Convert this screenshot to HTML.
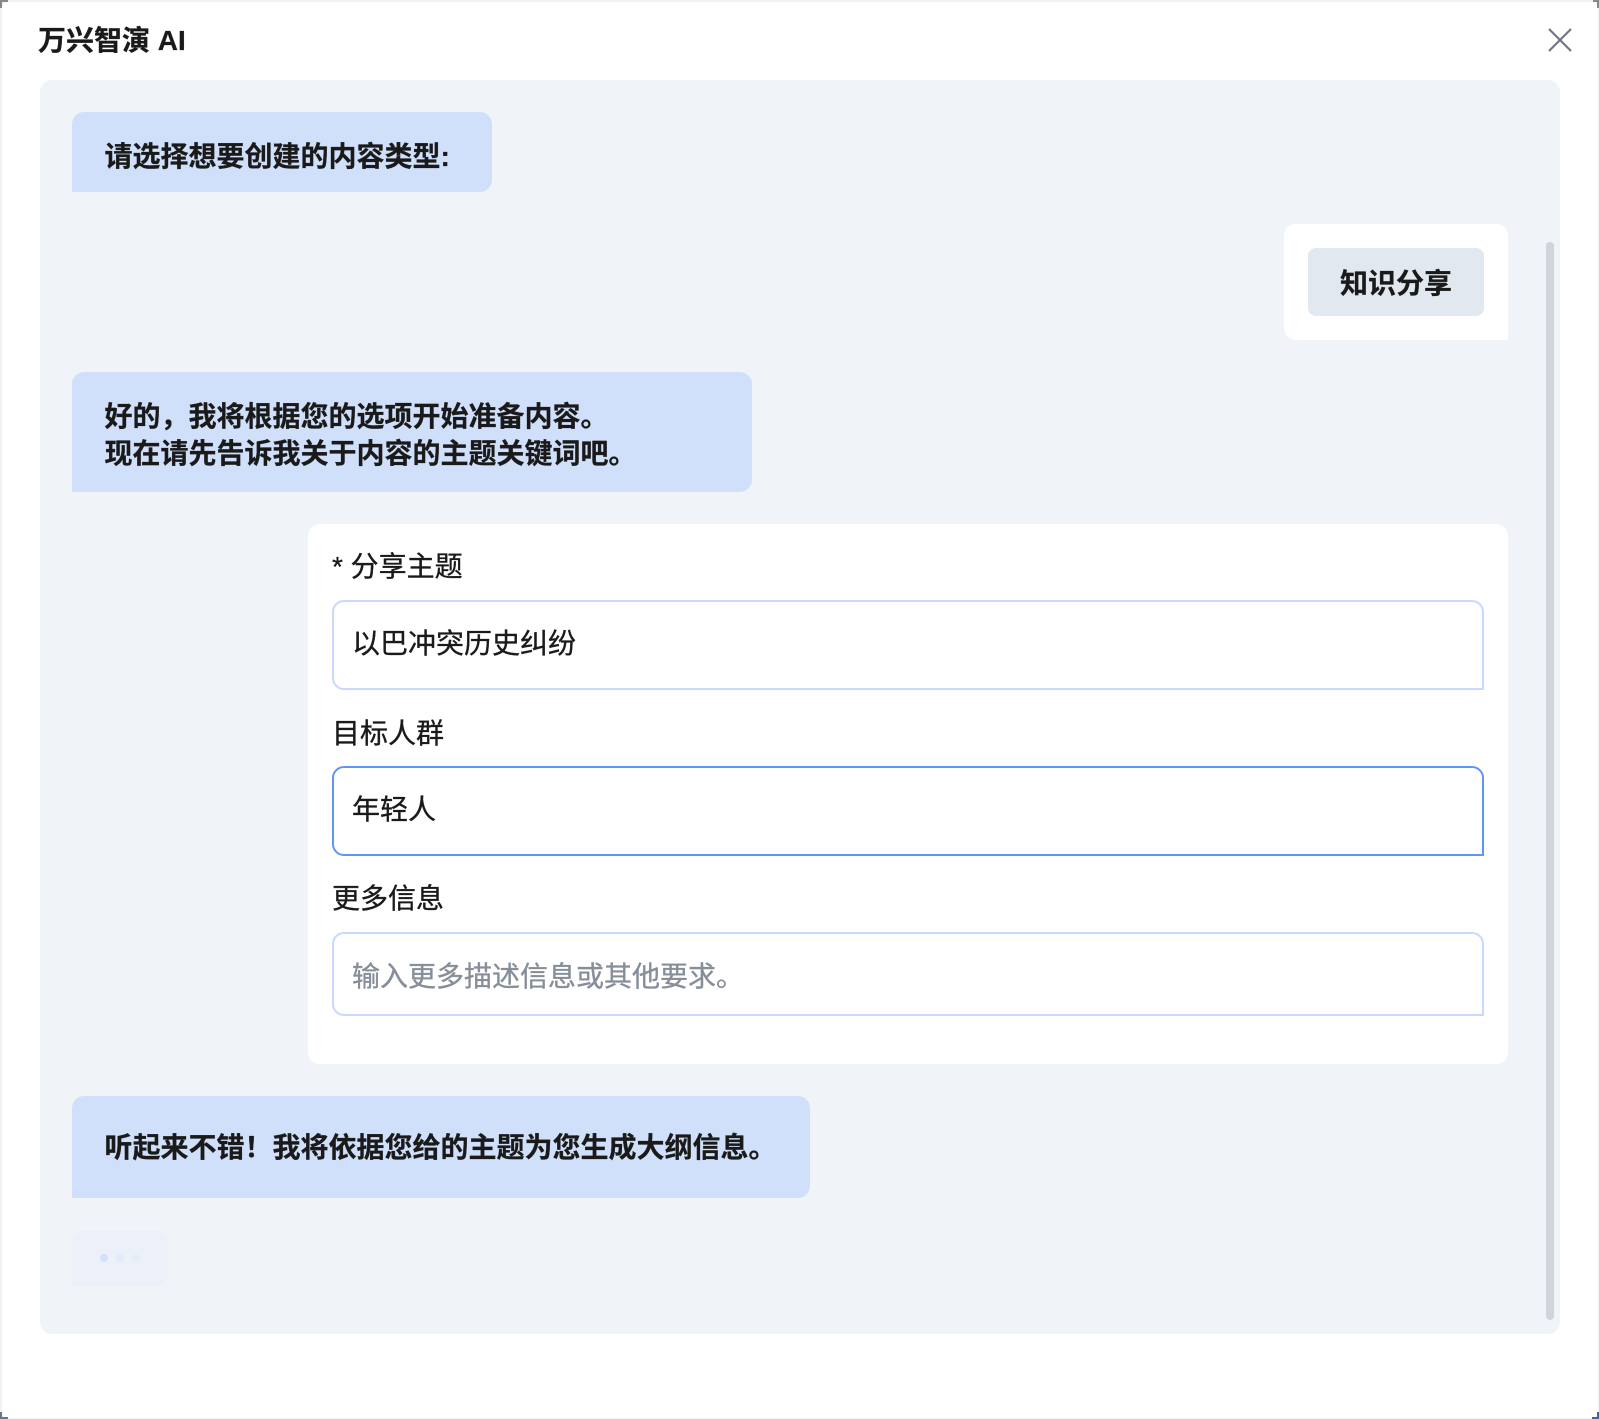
<!DOCTYPE html>
<html lang="zh">
<head>
<meta charset="utf-8">
<title>万兴智演 AI</title>
<style>
*{box-sizing:border-box;margin:0;padding:0}
html,body{width:1599px;height:1419px;overflow:hidden;background:#f0f1f3}
body{position:relative;font-family:"Liberation Sans","WenQuanYi Zen Hei","Noto Sans CJK SC",sans-serif;color:#1a1a1a;font-size:28px}
.a{position:absolute}
.t{position:absolute;white-space:nowrap;line-height:38px;-webkit-text-stroke:0.35px currentColor}
.b{font-weight:700;-webkit-text-stroke:0.25px currentColor}
.bubble{position:absolute;background:#d1e0fa;border-radius:12px 12px 12px 0;left:72px}
.inp{position:absolute;left:332px;width:1152px;background:#fff;border:2px solid #c7d9fe;border-radius:12px 12px 0 12px}
</style>
</head>
<body>
<div class="a" style="left:2px;top:2px;width:1596px;height:1416px;background:#fff;border-radius:6px"></div>
<div class="a" style="left:0;top:0;width:8px;height:2px;background:#85888d"></div>
<div class="a" style="left:0;top:0;width:2px;height:8px;background:#85888d"></div>
<div class="a" style="right:0;top:0;width:6px;height:2px;background:#85888d"></div>
<div class="a" style="right:0;top:0;width:2px;height:8px;background:#85888d"></div>
<div class="a" style="left:0;top:1417px;width:8px;height:2px;background:#6b7686"></div>
<div class="a" style="left:0;top:1412px;width:2px;height:7px;background:#6b7686"></div>
<div class="a" style="right:0;top:1417px;width:7px;height:2px;background:#4a6595"></div>
<div class="a" style="right:0;top:1412px;width:2px;height:7px;background:#4a6595"></div>

<div class="t b" style="left:38px;top:22px">万兴智演 AI</div>
<svg class="a" style="left:1548px;top:28px" width="24" height="24" viewBox="0 0 24 24"><path d="M1 1L23 23M23 1L1 23" stroke="#6b7280" stroke-width="2" fill="none"/></svg>

<div class="a" style="left:40px;top:80px;width:1520px;height:1254px;background:#f0f4f9;border-radius:12px"></div>
<div class="a" style="left:1546px;top:242px;width:8px;height:1078px;background:#d1d5db;border-radius:4px"></div>

<div class="bubble" style="top:112px;width:420px;height:80px"></div>
<div class="t b" style="left:104.5px;top:138px">请选择想要创建的内容类型:</div>

<div class="a" style="left:1284px;top:224px;width:224px;height:116px;background:#fff;border-radius:12px 12px 0 12px"></div>
<div class="a" style="left:1308px;top:248px;width:176px;height:68px;background:#e1e8ef;border-radius:8px"></div>
<div class="t b" style="left:1340px;top:265px">知识分享</div>

<div class="bubble" style="top:372px;width:680px;height:120px"></div>
<div class="t b" style="left:104.5px;top:398px">好的，我将根据您的选项开始准备内容。</div>
<div class="t b" style="left:104.5px;top:435px">现在请先告诉我关于内容的主题关键词吧。</div>

<div class="a" style="left:308px;top:524px;width:1200px;height:540px;background:#fff;border-radius:12px"></div>
<div class="t" style="left:332px;top:548px">* 分享主题</div>
<div class="inp" style="top:600px;height:90px"></div>
<div class="t" style="left:352px;top:625px">以巴冲突历史纠纷</div>
<div class="t" style="left:332px;top:715px">目标人群</div>
<div class="inp" style="top:766px;height:90px;border-color:#5f94f8"></div>
<div class="t" style="left:352px;top:791px">年轻人</div>
<div class="t" style="left:332px;top:880px">更多信息</div>
<div class="inp" style="top:932px;height:84px"></div>
<div class="t" style="left:352px;top:958px;color:#868e99">输入更多描述信息或其他要求。</div>

<div class="bubble" style="top:1096px;width:738px;height:102px"></div>
<div class="t b" style="left:104.5px;top:1129px">听起来不错！我将依据您给的主题为您生成大纲信息。</div>

<div class="a" style="left:72px;top:1230px;width:96px;height:56px;background:#ecf0f9;border-radius:12px 12px 12px 0"></div>
<div class="a" style="left:100px;top:1254px;width:8px;height:8px;border-radius:50%;background:#d4e1fb"></div>
<div class="a" style="left:116px;top:1254px;width:8px;height:8px;border-radius:50%;background:#e3eafa"></div>
<div class="a" style="left:132px;top:1254px;width:8px;height:8px;border-radius:50%;background:#e6ecf9"></div>
</body>
</html>
